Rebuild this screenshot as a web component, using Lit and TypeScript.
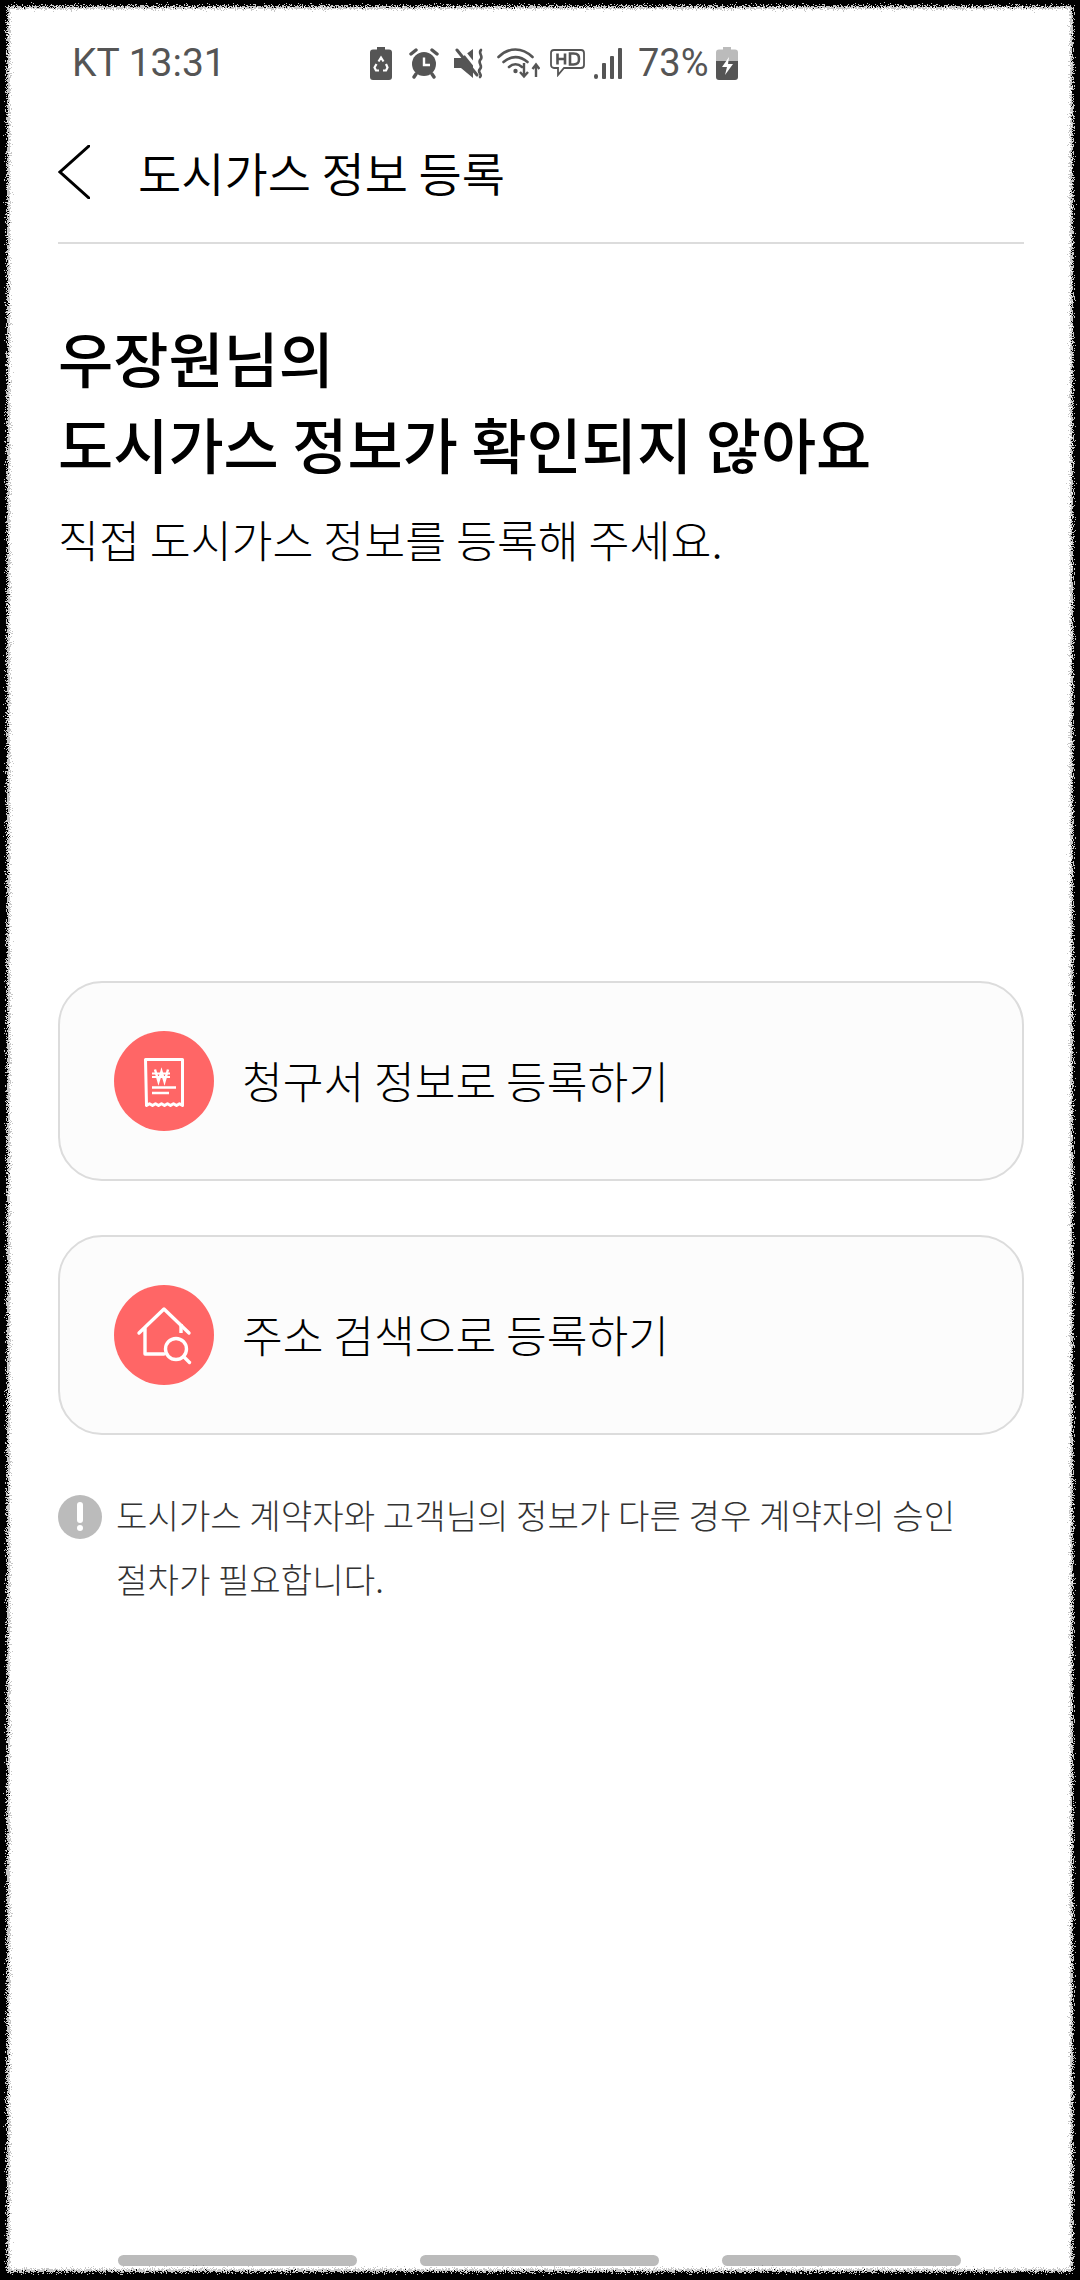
import { LitElement, html, css, svg } from "lit";
import { customElement } from "lit/decorators.js";

const recycleBattery = html`<svg class="ic m17" width="22" height="33" viewBox="0 0 22 33">
  <path d="M7 0h8v2.500h4a3 3 0 0 1 3 3V30a3 3 0 0 1-3 3H3a3 3 0 0 1-3-3V5.500a3 3 0 0 1 3-3h4z" fill="#555" />
  <path d="M8.500 14.500 11 10.500l2.500 4M16 17l1.500 3.500-1.500 3h-3M9 23.500H6l-1.500-3 2-3.500" fill="none" stroke="#fff" stroke-width="2.200" />
</svg>`;

const alarm = html`<svg class="ic m15" width="30" height="31" viewBox="1 1 30 31">
  <circle cx="16" cy="17" r="12" fill="#555" />
  <path d="M16 10.500v7.500h6" fill="none" stroke="#fff" stroke-width="2.400" />
  <path d="M3 7 8 3M29 7l-5-4M8 27 6 30M24 27l2 3" fill="none" stroke="#555" stroke-width="3.400" stroke-linecap="round" />
</svg>`;

const muteVibrate = html`<svg class="ic m13" width="30" height="31" viewBox="0 0 30 31">
  <path d="M0 10h7L19 1v29L7 20H0z" fill="#555" />
  <path d="M7 0 27 25" fill="none" stroke="#fff" stroke-width="3" />
  <path d="M3 2 23 27" fill="none" stroke="#555" stroke-width="3" stroke-linecap="round" />
  <path d="M27 2c-3.500 3.500 3 6-.5 9.500s3 6-.5 9.500 3 5.500 0 8" fill="none" stroke="#555" stroke-width="2.600" stroke-linecap="round" />
</svg>`;

const wifi = html`<svg class="ic m10" width="43" height="32" viewBox="0 0 43 32">
  <path d="M1.500 10C12 0 25 0 35.500 10M6.500 15c7.500-6.500 16.500-6.500 24 0M12 20c4-3.500 9-3.500 13 0" fill="none" stroke="#555" stroke-width="2.600" stroke-linecap="round" />
  <circle cx="18.500" cy="24" r="2.200" fill="#555" />
  <path d="M27 16v13M23 25l4 4.500 4-4.500M39 30V18M35.500 22l3.500-4.500 3.500 4.500" fill="none" stroke="#555" stroke-width="2.400" />
</svg>`;

const hd = html`<svg class="ic m8" width="35" height="28" viewBox="0 0 35 28">
  <path d="M4 1h27a3 3 0 0 1 3 3v12a3 3 0 0 1-3 3H14l-6 7v-7H4a3 3 0 0 1-3-3V4a3 3 0 0 1 3-3z" fill="none" stroke="#555" stroke-width="1.800" />
  <path d="M7.500 4.500v11M15 4.500v11M7.500 10H15M20 4.500v11h3.500c5 0 5.500-2.500 5.500-5.500s-.5-5.500-5.500-5.500z" fill="none" stroke="#555" stroke-width="2.600" />
</svg>`;

const signal = html`<svg class="ic m16" width="29" height="31" viewBox="0 0 29 31">
  <rect x="1" y="26" width="4" height="5" rx="2" fill="#555" />
  <rect x="9" y="15" width="4" height="16" rx="1" fill="#555" />
  <rect x="17" y="8" width="4" height="23" rx="1" fill="#555" />
  <rect x="25" y="0" width="4" height="31" rx="1" fill="#555" />
</svg>`;

const battery = html`<svg class="ic" width="22" height="33" viewBox="0 0 22 33">
  <path d="M7 0h8v2.500h4a3 3 0 0 1 3 3V14H0V5.500a3 3 0 0 1 3-3h4z" fill="#bbb" />
  <path d="M0 14h22v16a3 3 0 0 1-3 3H3a3 3 0 0 1-3-3z" fill="#555" />
  <path d="M13 10 6 20h5l-2 8 8-11h-5z" fill="#fff" />
</svg>`;

const receipt = svg`<path d="M31.500 28.500h37v46l-3-1.800-3 1.800-3-1.800-3 1.800-3-1.800-3 1.800-3-1.800-3 1.800-3-1.800-3 1.800-3-1.800-3 1.800z" fill="none" stroke="#fff" stroke-width="3" stroke-linejoin="round" />
  <path d="M41 38.500l3.500 12 3-10 3 10 3.500-12" fill="none" stroke="#fff" stroke-width="2.400" />
  <path d="M38 42.500h18M38 46h18" fill="none" stroke="#fff" stroke-width="1.800" />
  <path d="M38 56.500h24M38 62h17" fill="none" stroke="#fff" stroke-width="2.600" />`;

const houseSearch = svg`<path d="M25 48 50 24l25 24M31 43v26h19" fill="none" stroke="#fff" stroke-width="3.400" stroke-linecap="round" stroke-linejoin="round" />
  <path d="M67 39v9" stroke="#fff" stroke-width="3.400" />
  <circle cx="62" cy="64" r="10.500" fill="#ff6666" stroke="#fff" stroke-width="3.400" />
  <path d="m69.500 71.500 6 6" fill="none" stroke="#fff" stroke-width="3.400" stroke-linecap="round" />`;

// rough hand-cut edge around the whole shot
const frame = html`<svg class="frame" width="1080" height="2280" viewBox="0 0 1080 2280">
  <defs>
    <filter id="rough" x="-20" y="-20" width="1120" height="2320" filterUnits="userSpaceOnUse">
      <feTurbulence type="fractalNoise" baseFrequency="0.9" numOctaves="2" seed="4" />
      <feDisplacementMap in="SourceGraphic" scale="11" xChannelSelector="R" yChannelSelector="G" />
    </filter>
  </defs>
  <g filter="url(#rough)">
    <path d="M-30-30H1110V2310H-30zM10 9V2269H1070V9z" fill="#000" fill-rule="evenodd" opacity="0.22" />
    <path d="M-30-30H1110V2310H-30zM7 6V2272H1073V6z" fill="#000" fill-rule="evenodd" />
  </g>
</svg>`;

@customElement("app-root")
export class AppRoot extends LitElement {
  static styles = css`
    :host {
      display: block;
      position: relative;
      width: 1080px;
      height: 2280px;
      overflow: hidden;
      box-sizing: border-box;
      padding: 7px 7px 6px 8px;
      background: #fff;
      font-family: "Noto Sans CJK KR", "Noto Sans", sans-serif;
      color: #000;
    }

    .frame {
      position: absolute;
      top: 0;
      left: 0;
      pointer-events: none;
    }

    .page {
      height: 100%;
      display: flex;
      flex-direction: column;
    }

    .status {
      height: 112px;
      flex: none;
      display: flex;
      align-items: center;
      padding: 0 36px 0 64px;
      color: #555;
      font-family: Roboto, sans-serif;
      font-size: 39px;
    }
    .status .time {
      width: 298px;
    }
    .icons {
      display: flex;
      align-items: center;
    }
    .ic {
      display: block;
      flex: none;
    }
    .m8 {
      margin-right: 8px;
    }
    .m10 {
      margin-right: 10px;
    }
    .m13 {
      margin-right: 13px;
    }
    .m15 {
      margin-right: 15px;
    }
    .m16 {
      margin-right: 16px;
    }
    .m17 {
      margin-right: 17px;
    }
    .pct {
      margin-right: 7px;
      font-size: 38px;
      line-height: 40px;
    }

    .appbar {
      flex: none;
      height: 125px;
      box-sizing: border-box;
      margin: 0 49px 0 50px;
      padding-bottom: 18px;
      display: flex;
      align-items: center;
      gap: 48px;
      border-bottom: 2px solid #dcdcdc;
    }
    .appbar .title {
      font-size: 47px;
      line-height: 60px;
      font-weight: 350;
    }

    .content {
      flex: 1;
      display: flex;
      flex-direction: column;
      padding: 70px 49px 0 50px;
    }

    h1 {
      margin: 0;
      font-size: 60px;
      line-height: 86px;
      font-weight: 500;
    }
    .sub {
      margin: 23px 0 0;
      font-size: 44.500px;
      line-height: 60px;
      font-weight: 300;
    }

    .cards {
      margin-top: 412px;
      display: flex;
      flex-direction: column;
      gap: 54px;
    }
    .card {
      height: 200px;
      box-sizing: border-box;
      display: flex;
      align-items: center;
      gap: 28px;
      padding-left: 54px;
      background: #fcfcfc;
      border: 2px solid #dcdcdc;
      border-radius: 44px;
      font-size: 44.300px;
      font-weight: 300;
    }
    .card span {
      padding-bottom: 3px;
    }
    .badge {
      width: 100px;
      height: 100px;
      flex: none;
      border-radius: 50%;
      background: #ff6666;
    }
    .badge svg {
      display: block;
    }

    .note {
      margin-top: 47px;
      display: grid;
      grid-template-columns: 44px 1fr;
      column-gap: 14px;
      font-size: 34.200px;
      line-height: 64px;
      font-weight: 300;
      color: #333;
    }
    .note svg {
      display: block;
      margin-top: 13px;
    }
    .note span {
      max-width: 850px;
    }

    .nav {
      flex: none;
      margin-top: auto;
      padding: 0 112px 8px 110px;
      display: flex;
      justify-content: space-between;
    }
    .nav span {
      width: 239px;
      height: 11px;
      border-radius: 6px;
      background: #bbb;
    }
  `;

  render() {
    return html`
      <div class="page">
        <div class="status">
          <span class="time">KT 13:31</span>
          <div class="icons">
            ${recycleBattery} ${alarm} ${muteVibrate} ${wifi} ${hd} ${signal}
            <span class="pct">73%</span>
            ${battery}
          </div>
        </div>
        <header class="appbar">
          <svg class="ic" width="32" height="54" viewBox="0 0 32 54">
            <path d="M31 1 2 27l29 26" fill="none" stroke="#000" stroke-width="3" stroke-linecap="round" />
          </svg>
          <span class="title">도시가스 정보 등록</span>
        </header>
        <main class="content">
          <h1>우장원님의<br />도시가스 정보가 확인되지 않아요</h1>
          <p class="sub">직접 도시가스 정보를 등록해 주세요.</p>
          <div class="cards">
            <div class="card">
              <div class="badge"><svg width="100" height="100" viewBox="0 0 100 100">${receipt}</svg></div>
              <span>청구서 정보로 등록하기</span>
            </div>
            <div class="card">
              <div class="badge"><svg width="100" height="100" viewBox="0 0 100 100">${houseSearch}</svg></div>
              <span>주소 검색으로 등록하기</span>
            </div>
          </div>
          <div class="note">
            <svg width="44" height="44" viewBox="0 0 44 44">
              <circle cx="22" cy="22" r="22" fill="#bbb" />
              <path d="M22 10v15" stroke="#fff" stroke-width="6" stroke-linecap="round" />
              <circle cx="22" cy="33" r="3" fill="#fff" />
            </svg>
            <span>도시가스 계약자와 고객님의 정보가 다른 경우 계약자의 승인 절차가 필요합니다.</span>
          </div>
        </main>
        <div class="nav"><span></span><span></span><span></span></div>
      </div>
      ${frame}
    `;
  }
}
